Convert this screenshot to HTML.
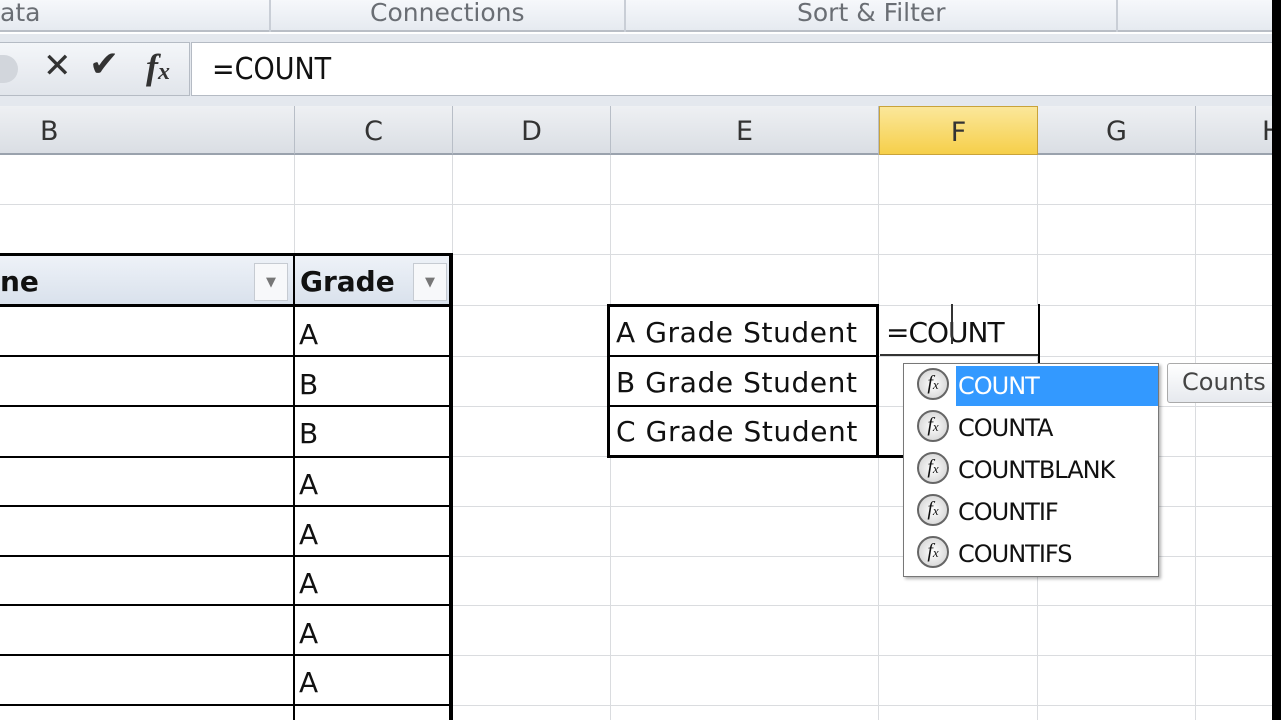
<!DOCTYPE html>
<html><head><style>
body{margin:0;width:1281px;height:720px;overflow:hidden;background:#fff;position:relative;font-family:"DejaVu Sans","Liberation Sans",sans-serif}
div{position:absolute;box-sizing:border-box}
.rib{left:0;top:0;width:1281px;height:32px;background:linear-gradient(#f6f8fb,#e6eaf0);border-bottom:2px solid #b9bec6}
.rt{top:-2px;font-size:25px;color:#6a6e74}
.sep{top:0;width:2px;height:32px;background:#c9ced6}
.fb{left:0;top:34px;width:1281px;height:72px;background:#e4e8ee}
.hdr{top:106px;height:49px;background:linear-gradient(#eef0f3,#dadee4);border-bottom:2px solid #9aa2ad;border-right:1px solid #b8bec7;font-size:27px;color:#333;text-align:center;line-height:52px}
.vl{top:155px;width:1px;height:565px;background:#dadcdf}
.hl{left:0;width:1272px;height:1px;background:#dadcdf}
.t{font-size:28px;color:#111;letter-spacing:0.6px}
.bl{background:#000}
.fx{width:32px;height:32px;border-radius:50%;border:2px solid #666;background:radial-gradient(#fff,#ccc);font-family:"Liberation Serif",serif;font-style:italic;font-size:20px;text-align:center;line-height:27px;color:#111}
.it{font-size:24px;color:#111;letter-spacing:-1px}
</style></head><body>
<div class="rib"></div>
<div class="rt" style="left:0">ata</div>
<div class="sep" style="left:269px"></div>
<div class="rt" style="left:370px">Connections</div>
<div class="sep" style="left:624px"></div>
<div class="rt" style="left:797px">Sort &amp; Filter</div>
<div class="sep" style="left:1116px"></div>
<div class="fb"></div>
<div style="left:0;top:42px;width:190px;height:54px;background:linear-gradient(#f4f6f9,#e1e5eb);border:1px solid #b5bbc4;border-left:none"></div>
<div style="left:0;top:55px;width:18px;height:28px;border-radius:0 14px 14px 0;background:#d2d6dc"></div>
<div style="left:43px;top:46px;font-size:34px;color:#333;font-family:'DejaVu Sans'">✕</div>
<div style="left:89px;top:44px;font-size:36px;color:#333">✔</div>
<div style="left:146px;top:46px;font-size:36px;font-family:'Liberation Serif',serif;font-style:italic;font-weight:bold;color:#333">f<span style="font-size:24px">x</span></div>
<div style="left:191px;top:42px;width:1090px;height:54px;background:#fff;border:1px solid #b5bbc4"></div>
<div style="left:212px;top:52px;font-size:30px;color:#111;font-family:'DejaVu Sans Condensed','DejaVu Sans',sans-serif">=COUNT</div>
<div class="hdr" style="left:0;width:295px;text-align:left;padding-left:40px">B</div>
<div class="hdr" style="left:295px;width:158px">C</div>
<div class="hdr" style="left:453px;width:158px">D</div>
<div class="hdr" style="left:611px;width:268px">E</div>
<div class="hdr" style="left:879px;width:159px;background:linear-gradient(#fbe79a,#f6cf4a);border:1px solid #c9a33a">F</div>
<div class="hdr" style="left:1038px;width:158px">G</div>
<div class="hdr" style="left:1196px;width:80px;text-align:left;padding-left:66px">H</div>
<div class="vl" style="left:294px"></div><div class="vl" style="left:452px"></div><div class="vl" style="left:610px"></div><div class="vl" style="left:878px"></div><div class="vl" style="left:1037px"></div><div class="vl" style="left:1195px"></div>
<div class="hl" style="top:204px"></div><div class="hl" style="top:254px"></div><div class="hl" style="top:305px"></div><div class="hl" style="top:356px"></div><div class="hl" style="top:406px"></div><div class="hl" style="top:456px"></div><div class="hl" style="top:506px"></div><div class="hl" style="top:556px"></div><div class="hl" style="top:605px"></div><div class="hl" style="top:655px"></div><div class="hl" style="top:705px"></div>
<div style="left:0;top:255px;width:452px;height:50px;background:linear-gradient(#eef2f8,#d9e1ec)"></div>
<div class="bl" style="left:0;top:253px;width:453px;height:3px"></div>
<div class="bl" style="left:0;top:304px;width:453px;height:3px"></div>
<div class="bl" style="left:449px;top:253px;width:4px;height:467px"></div>
<div class="bl" style="left:293px;top:253px;width:2px;height:467px"></div>
<div class="bl" style="left:0;top:355px;width:452px;height:2px"></div><div class="bl" style="left:0;top:405px;width:452px;height:2px"></div><div class="bl" style="left:0;top:456px;width:452px;height:2px"></div><div class="bl" style="left:0;top:505px;width:452px;height:2px"></div><div class="bl" style="left:0;top:555px;width:452px;height:2px"></div><div class="bl" style="left:0;top:604px;width:452px;height:2px"></div><div class="bl" style="left:0;top:654px;width:452px;height:2px"></div><div class="bl" style="left:0;top:704px;width:452px;height:2px"></div>
<div class="t" style="left:0;top:265px;font-weight:bold;letter-spacing:0">ne</div>
<div class="t" style="left:300px;top:265px;font-weight:bold;letter-spacing:0">Grade</div>
<div style="left:254px;top:263px;width:34px;height:38px;border:1px solid #c6cbd2;background:#f7f8fa;color:#777;font-size:13px;text-align:center;line-height:38px">▼</div>
<div style="left:413px;top:263px;width:34px;height:38px;border:1px solid #c6cbd2;background:#f7f8fa;color:#777;font-size:13px;text-align:center;line-height:38px">▼</div>
<div class="t" style="left:299px;top:318px">A</div>
<div class="t" style="left:299px;top:368px">B</div>
<div class="t" style="left:299px;top:417px">B</div>
<div class="t" style="left:299px;top:468px">A</div>
<div class="t" style="left:299px;top:518px">A</div>
<div class="t" style="left:299px;top:567px">A</div>
<div class="t" style="left:299px;top:617px">A</div>
<div class="t" style="left:299px;top:666px">A</div>
<div style="left:607px;top:304px;width:272px;height:154px;border:3px solid #000;background:#fff"></div>
<div class="bl" style="left:607px;top:355px;width:272px;height:2px"></div>
<div class="bl" style="left:607px;top:405px;width:272px;height:2px"></div>
<div class="bl" style="left:876px;top:304px;width:3px;height:154px"></div>
<div class="bl" style="left:879px;top:455px;width:30px;height:3px"></div>
<div class="t" style="left:616px;top:316px">A Grade Student</div>
<div class="t" style="left:616px;top:366px">B Grade Student</div>
<div class="t" style="left:616px;top:415px">C Grade Student</div>
<div style="left:880px;top:306px;width:158px;height:50px;background:#fff;border-bottom:2px solid #333"></div>
<div class="t" style="left:886px;top:316px;letter-spacing:-1px">=COUNT</div>
<div class="bl" style="left:1038px;top:304px;width:2px;height:60px"></div>
<div class="bl" style="left:951px;top:304px;width:2px;height:40px;background:#333"></div>
<div style="left:903px;top:363px;width:256px;height:214px;background:#fff;border:1px solid #777;box-shadow:2px 2px 3px rgba(0,0,0,.3)"></div>
<div style="left:956px;top:366px;width:202px;height:40px;background:#3399ff"></div>
<div class="fx" style="left:917px;top:368px">f<span style="font-size:13px">x</span></div>
<div class="fx" style="left:917px;top:410px">f<span style="font-size:13px">x</span></div>
<div class="fx" style="left:917px;top:452px">f<span style="font-size:13px">x</span></div>
<div class="fx" style="left:917px;top:494px">f<span style="font-size:13px">x</span></div>
<div class="fx" style="left:917px;top:536px">f<span style="font-size:13px">x</span></div>
<div class="it" style="left:958px;top:372px;color:#fff">COUNT</div>
<div class="it" style="left:958px;top:414px">COUNTA</div>
<div class="it" style="left:958px;top:456px">COUNTBLANK</div>
<div class="it" style="left:958px;top:498px">COUNTIF</div>
<div class="it" style="left:958px;top:540px">COUNTIFS</div>
<div style="left:1167px;top:363px;width:120px;height:40px;border:1px solid #aaa;border-radius:3px;background:linear-gradient(#fff,#e6e9ee);font-size:24px;color:#444;padding:4px 0 0 14px">Counts</div>
<div style="left:1272px;top:0;width:9px;height:720px;background:#000"></div>
</body></html>
